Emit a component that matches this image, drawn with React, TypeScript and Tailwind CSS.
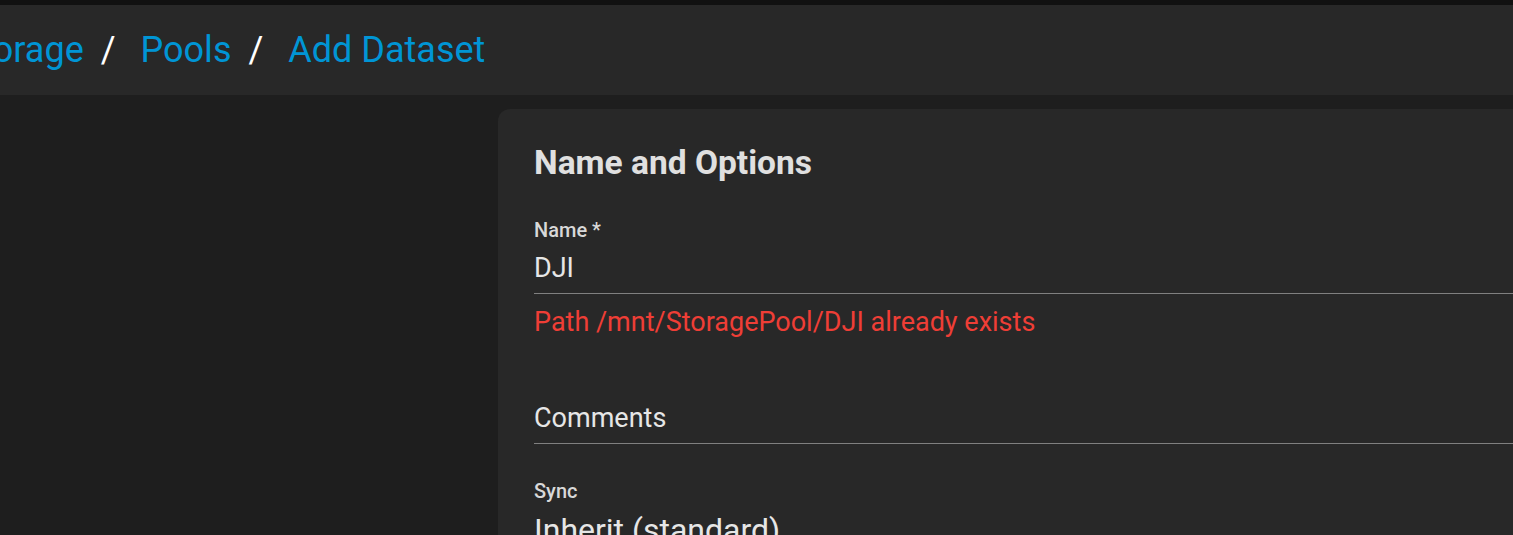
const crumbs = ["Storage", "Pools", "Add Dataset"];

export default function App() {
  return (
    <div
      className="h-[535px] w-[1513px] overflow-hidden bg-[#1e1e1e]"
      style={{ fontFamily: "Roboto, 'Liberation Sans', sans-serif" }}
    >
      {/* top strip */}
      <div className="h-[5px] bg-[#111111]" />

      {/* breadcrumb header */}
      <div className="flex h-[90px] items-center bg-[#282828]">
        <div className="-ml-[40px] flex items-center text-[36px] leading-none">
          {crumbs.map((c, i) => (
            <div key={c} className="flex items-center">
              {i > 0 && <span className="ml-[17px] mr-[25px] text-white">/</span>}
              <span className="text-[#0095d5]">{c}</span>
            </div>
          ))}
        </div>
      </div>

      {/* body */}
      <div className="flex pt-[14px]">
        <div className="w-[498px] shrink-0" />
        <div className="flex-1 rounded-tl-[12px] bg-[#282828] pl-[36px] pt-[34px]">
          <h2 className="text-[33.5px] font-bold leading-[40px] text-[#e0e0e0]">Name and Options</h2>

          <div className="mt-[35px]">
            <div className="text-[20px] font-medium leading-[24px] text-[#d8d8d8]">Name *</div>
            <div className="border-b border-[#808080] pt-[11px] pb-[10px] text-[27px] leading-[30px] text-[#e6e6e6]">
              DJI
            </div>
            <div className="pt-[13px] text-[27px] leading-[30px] text-[#ef3e36]">
              Path /mnt/StoragePool/DJI already exists
            </div>
          </div>

          <div className="mt-[66px] border-b border-[#808080] pb-[10px] text-[27px] leading-[30px] text-[#e6e6e6]">
            Comments
          </div>

          <div className="mt-[35px]">
            <div className="text-[20px] font-medium leading-[24px] text-[#d8d8d8]">Sync</div>
            <div className="pt-[9px] text-[32px] leading-[36px] text-[#e6e6e6]">Inherit (standard)</div>
          </div>
        </div>
      </div>
    </div>
  );
}
